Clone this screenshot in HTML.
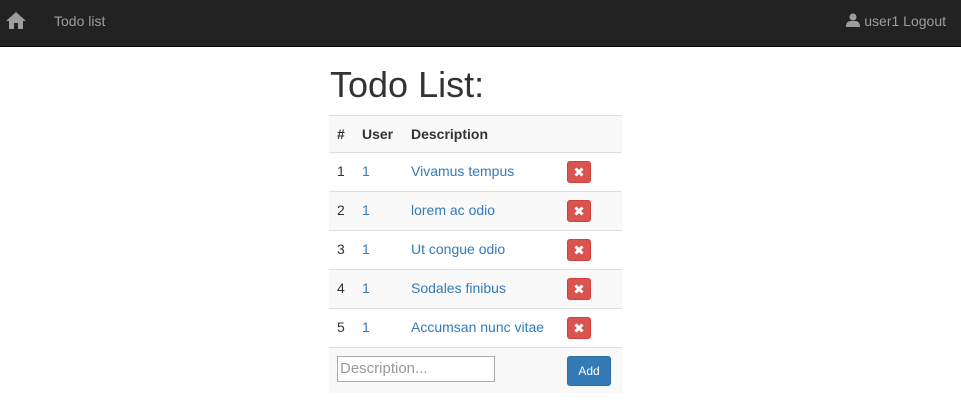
<!DOCTYPE html>
<html><head><style>
*{box-sizing:border-box;margin:0;padding:0}
body{width:961px;height:409px;background:#fff;font-family:"Liberation Sans",sans-serif;font-size:14px;color:#333;position:relative;overflow:hidden}
.nav{position:absolute;left:0;top:0;width:961px;height:47px;background:#222;border-bottom:1px solid #080808}
.nav .t{position:absolute;left:54px;top:13px;color:#9d9d9d;font-size:14px}
.nav .r{position:absolute;right:15px;top:13px;color:#9d9d9d;font-size:14px}
h1{position:absolute;left:330px;top:64px;font-size:36px;font-weight:500;color:#333}
.tbl{position:absolute;left:329px;top:115px;width:293px}
.row{position:relative;height:39px;border-top:1px solid #ddd}
.row span{position:absolute;top:10px}
.g{background:#f9f9f9}
a{color:#337ab7;text-decoration:none}
.x{position:absolute;left:238px;top:8px;width:24px;height:22px;background:#d9534f;border:1px solid #d43f3a;border-radius:3px}
</style></head><body>
<div class="nav">
<svg style="position:absolute;left:6px;top:11px" width="20" height="19" viewBox="0 0 20 19"><path d="M10 1 L0 10 H3 V18 H8 V12 H12 V18 H17 V10 H20 Z" fill="#9d9d9d"/></svg>
<div class="t">Todo list</div>
<div class="r"><svg width="14" height="14" viewBox="0 0 14 14" style="vertical-align:-1px"><circle cx="7" cy="4" r="3.5" fill="#9d9d9d"/><path d="M0 14 Q0 8 5 8 H9 Q14 8 14 14Z" fill="#9d9d9d"/></svg> user1 Logout</div>
</div>
<h1>Todo List:</h1>
<div class="tbl">
<div class="row g" style="height:38px;border-top:1px solid #ddd;border-bottom:1px solid #ddd;font-weight:bold"><span style="left:8px">#</span><span style="left:33px">User</span><span style="left:82px">Description</span></div>
<div class="row" style="border-top:0;height:38px"><span style="left:8px">1</span><span style="left:33px;color:#337ab7">1</span><span style="left:82px"><a>Vivamus tempus</a></span><div class="x"><svg width="22" height="20" viewBox="0 0 22 20"><path d="M7.5 6.5 L14.5 13.5 M14.5 6.5 L7.5 13.5" stroke="#fff" stroke-width="3"/></svg></div></div>
<div class="row g"><span style="left:8px">2</span><span style="left:33px;color:#337ab7">1</span><span style="left:82px"><a>lorem ac odio</a></span><div class="x"><svg width="22" height="20" viewBox="0 0 22 20"><path d="M7.5 6.5 L14.5 13.5 M14.5 6.5 L7.5 13.5" stroke="#fff" stroke-width="3"/></svg></div></div>
<div class="row"><span style="left:8px">3</span><span style="left:33px;color:#337ab7">1</span><span style="left:82px"><a>Ut congue odio</a></span><div class="x"><svg width="22" height="20" viewBox="0 0 22 20"><path d="M7.5 6.5 L14.5 13.5 M14.5 6.5 L7.5 13.5" stroke="#fff" stroke-width="3"/></svg></div></div>
<div class="row g"><span style="left:8px">4</span><span style="left:33px;color:#337ab7">1</span><span style="left:82px"><a>Sodales finibus</a></span><div class="x"><svg width="22" height="20" viewBox="0 0 22 20"><path d="M7.5 6.5 L14.5 13.5 M14.5 6.5 L7.5 13.5" stroke="#fff" stroke-width="3"/></svg></div></div>
<div class="row"><span style="left:8px">5</span><span style="left:33px;color:#337ab7">1</span><span style="left:82px"><a>Accumsan nunc vitae</a></span><div class="x"><svg width="22" height="20" viewBox="0 0 22 20"><path d="M7.5 6.5 L14.5 13.5 M14.5 6.5 L7.5 13.5" stroke="#fff" stroke-width="3"/></svg></div></div>
<div class="row g" style="height:46px">
<div style="position:absolute;left:8px;top:8px;width:158px;height:26px;border:1px solid #a9a9a9;background:#fff;color:#999;font-size:15px;padding:3px 2px">Description...</div>
<div style="position:absolute;left:238px;top:8px;width:44px;height:30px;background:#337ab7;border:1px solid #2e6da4;border-radius:3px;color:#fff;font-size:12px;text-align:center;line-height:28px">Add</div>
</div>
</div>
</body></html>
